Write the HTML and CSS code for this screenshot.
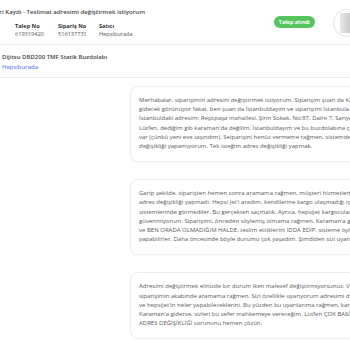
FILE: index.html
```html
<!DOCTYPE html>
<html lang="tr">
    <head>
        <title>Talep Kaydı</title>
        <link rel="stylesheet" href="styles.css">
    </head>
    <body>
        <header class="ticket">
            <div class="ticket-main">
                <h1 class="ticket-title">Müşteri Kaydı - Teslimat adresimi değiştirmek istiyorum</h1>
                <div class="ticket-info">
                    <div class="info-item">
                        <span class="info-label">Talep No</span>
                        <span class="info-value">619319420</span>
                    </div>
                    <div class="info-item">
                        <span class="info-label">Sipariş No</span>
                        <span class="info-value">516137731</span>
                    </div>
                    <div class="info-item">
                        <span class="info-label">Satıcı</span>
                        <span class="info-value">Hepsiburada</span>
                    </div>
                </div>
            </div>
            <span class="status">Talep alındı</span>
            <div class="avatar"><div class="avatar-img"></div></div>
        </header>

        <!-- Product -->
        <section class="product">
            <p class="product-name">Dijitsu DBD200 TMF Statik Buzdolabı</p>
            <a class="product-seller" href="#">Hepsiburada</a>
        </section>

        <!-- Messages -->
        <section class="messages">
            <div class="bubble">
                <p>Merhabalar, siparişimin adresini değiştirmek istiyorum. Siparişim şuan da Karaman'a<br>
                gidecek görünüyor fakat, ben şuan da İstanbuldayım ve siparişimi İstanbula almak istiyorum.<br>
                İstanbuldaki adresim: Reşitpaşa mahallesi, Şirin Sokak, No:87, Daire 7, Sarıyer/İstanbul.<br>
                Lütfen, dediğim gib karaman'da değilim, İstanbuldayım ve bu buzdolabına çok ihtiyacım<br>
                var (çünkü yeni eve taşındım). Seiparişini henüz vermeme rağmen, sistemden adres<br>
                değişikliği yapamıyorum. Tek isteğim adres değişikliği yapmak.</p>
            </div>
            <div class="bubble">
                <p>Garip şekilde, siparişten hemen sonra aramama rağmen, müşteri hizmetleriniz<br>
                adres değişikliği yapmadı. Hepsi Jet'i aradım, kendilerine kargo ulaşmadığı için<br>
                sistemlerinde görmediler. Bu gerçekten saçmalık. Ayrıca, hepsijet kargocularına<br>
                güvenmiyorum. Siparişimi, önceden söylemiş olmama rağmen, Karaman'a gönderirseniz<br>
                ve BEN ORADA OLMADIĞIM HALDE, teslim ettiklerini İDDA EDİP, sisteme öyle girebilirler<br>
                yapabilirler. Daha öncesinde böyle durumu çok yaşadım. Şimdiden sizi uyarıyorum.</p>
            </div>
            <div class="bubble">
                <p>Adresimi değiştirmek elinizde bir durum iken malesef değiştirmiyorsunuz. Ve<br>
                siparişimin akabinde aramama rağmen. Sizi özellikle uyarıyorum adresimi değiştirin<br>
                ve hepsijet'in neler yapabileceklerini. Bu yüzden bu uyarılarıma rağmen, kargo<br>
                Karaman'a giderse, sizleri bu sefer mahkemeye vereceğim. Lütfen ÇOK BASİT BİR<br>
                ADRES DEĞİŞİKLİĞİ sorununu hemen çözün.</p>
            </div>
        </section>
    </body>
</html>
```

FILE: styles.css
```css
/* Page */
body {
    margin: 0;
    padding: 0;
    width: 350px;
    overflow: hidden;
    background-color: #fff;
    font-family: "Open Sans", "Liberation Sans", sans-serif;
    color: #555;
}

p {
    margin: 0;
}

/* Ticket header */
.ticket {
    display: flex;
    align-items: flex-start;
    height: 44px;
    border-bottom: 1px solid #ececec;
}

.ticket-main {
    flex: 1;
    min-width: 0;
}

.ticket-title {
    margin: 7px 0 0 -19px;
    font-size: 6.1px;
    font-weight: 600;
    color: #4a4a4a;
    white-space: nowrap;
}

.ticket-info {
    display: grid;
    grid-template-columns: 43px 41px auto;
    padding: 6px 0 0 15px;
}

.info-item {
    display: flex;
    flex-direction: column;
}

.info-label {
    font-size: 5.6px;
    font-weight: 700;
    color: #333;
    line-height: 8px;
}

.info-value {
    font-size: 5.6px;
    color: #555;
    line-height: 8px;
}

.status {
    flex-shrink: 0;
    margin-top: 16px;
    padding: 0 5px;
    height: 12px;
    line-height: 12px;
    border-radius: 6px;
    background-color: #56c45f;
    color: #fff;
    font-size: 5.4px;
    font-weight: 700;
    white-space: nowrap;
}

.avatar {
    flex-shrink: 0;
    width: 26px;
    height: 26px;
    margin: 9px -11px 0 18px;
    border: 1px solid #e3e3e3;
    border-radius: 50%;
    background-color: #fff;
    display: flex;
    align-items: center;
    justify-content: center;
}

.avatar-img {
    width: 14px;
    height: 20px;
    background: linear-gradient(90deg, #e8e8e8, #bdbdbd);
    border-radius: 1px;
}

/* Product */
.product {
    height: 33px;
    padding: 8px 0 0 2px;
    box-sizing: border-box;
    border-bottom: 1px solid #ececec;
}

.product-name {
    font-size: 6px;
    font-weight: 600;
    color: #444;
    line-height: 9px;
}

.product-seller {
    display: block;
    font-size: 6px;
    color: #4a6bf0;
    text-decoration: none;
    line-height: 10px;
}

/* Messages */
.messages {
    display: flex;
    flex-direction: column;
    gap: 17px;
    padding: 8px 0 0 130px;
}

.bubble {
    width: 340px;
    padding: 9px 8px 10px 8px;
    border: 1px solid #eee;
    border-radius: 8px;
    background-color: #fff;
    box-shadow: 0 1px 3px rgba(0, 0, 0, 0.03);
}

.bubble p {
    font-size: 6px;
    line-height: 9.2px;
    color: #5a5a5a;
    white-space: nowrap;
}
```
